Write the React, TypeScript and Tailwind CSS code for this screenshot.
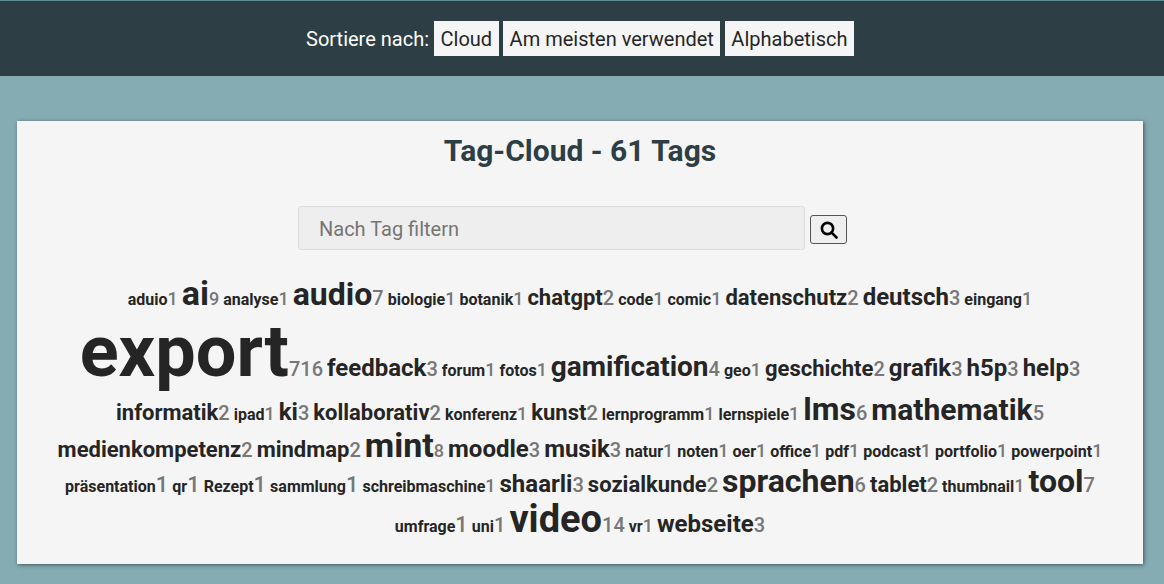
type Tag = [string, string, string, string];
const S = "text-[16px]", M = "text-[22px]", L = "text-[24px]", C = "text-[18px]", D = "text-[20px]", E = "text-[22px]";
const tags: Tag[] = [
["aduio","1",S,C],["ai","9","text-[34px]",C],["analyse","1",S,C],["audio","7","text-[32px]",D],["biologie","1",S,C],["botanik","1",S,C],["chatgpt","2",M,D],["code","1",S,C],["comic","1",S,C],["datenschutz","2",M,D],["deutsch","3",L,D],["eingang","1",S,C],
["export","716","text-[72px]",D],["feedback","3",L,D],["forum","1",S,C],["fotos","1",S,C],["gamification","4","text-[28px]",D],["geo","1",S,C],["geschichte","2",M,D],["grafik","3",L,D],["h5p","3",L,D],["help","3",L,D],
["informatik","2",M,D],["ipad","1",S,C],["ki","3",L,D],["kollaborativ","2",M,D],["konferenz","1",S,C],["kunst","2",M,D],["lernprogramm","1",S,C],["lernspiele","1",S,C],["lms","6","text-[32px]",D],["mathematik","5","text-[30px]",D],
["medienkompetenz","2",M,D],["mindmap","2",M,D],["mint","8","text-[34px]",C],["moodle","3",L,D],["musik","3",L,D],["natur","1",S,C],["noten","1",S,C],["oer","1",S,C],["office","1",S,C],["pdf","1",S,C],["podcast","1",S,C],["portfolio","1",S,C],["powerpoint","1",S,C],
["präsentation","1",S,E],["qr","1",S,E],["Rezept","1",S,E],["sammlung","1",S,E],["schreibmaschine","1",S,C],["shaarli","3",L,D],["sozialkunde","2",M,D],["sprachen","6","text-[32px]",D],["tablet","2",M,D],["thumbnail","1",S,C],["tool","7","text-[32px]",D],
["umfrage","1",S,E],["uni","1",S,D],["video","14","text-[38px]",D],["vr","1",S,C],["webseite","3",L,D]];
export default function App() {
  return (
    <div className="h-[584px] overflow-hidden bg-[#85acb3] font-['Roboto',sans-serif] text-[#252525]">
      <header className="h-[76px] bg-[#2e3e45] border-t border-[#5d8e96] flex items-center justify-center gap-[4.5px] text-[20px] pr-[4px]">
        <span className="text-white mr-[0.5px]">Sortiere nach:</span>
        {["Cloud","Am meisten verwendet","Alphabetisch"].map(t => <a key={t} className="bg-[#f5f5f5] h-[35px] px-[6.5px] flex items-center">{t}</a>)}
      </header>
      <main className="ml-[17px] mr-[21px] mt-[45px] bg-[#f5f5f5] h-[443px] shadow-[1px_1px_4px_rgba(0,0,0,0.5)] pt-[10px]">
        <h1 className="text-center text-[30px] font-bold text-[#2e3e45] leading-[40px]">Tag-Cloud - 61 Tags</h1>
        <div className="flex justify-center items-center gap-[5px] mt-[35px] pr-[15px]">
          <input readOnly placeholder="Nach Tag filtern" className="w-[507px] h-[44px] px-[20px] pt-[1px] bg-[#eeeeee] border border-[#dddddd] rounded-[3px] text-[20px] placeholder:text-[#757575]" />
          <button className="w-[37px] h-[29px] mt-[3px] bg-[#efefef] border border-[#555] rounded-[3px] flex items-center justify-center">
            <svg width="18" height="18" viewBox="0 0 24 24" fill="none" stroke="black" strokeWidth="3.5"><circle cx="10" cy="10" r="7.5"/><path d="M15.5 15.5L22 22" strokeLinecap="round"/></svg>
          </button>
        </div>
        <div className="mt-[25px] px-[20px] text-center font-bold leading-[1.1]">
          {tags.map(([t,c,s,k]) => <span key={t}><span className={s}>{t}</span><span className={"text-[#777] font-medium " + k}>{c}</span> </span>)}
        </div>
      </main>
    </div>
  );
}
